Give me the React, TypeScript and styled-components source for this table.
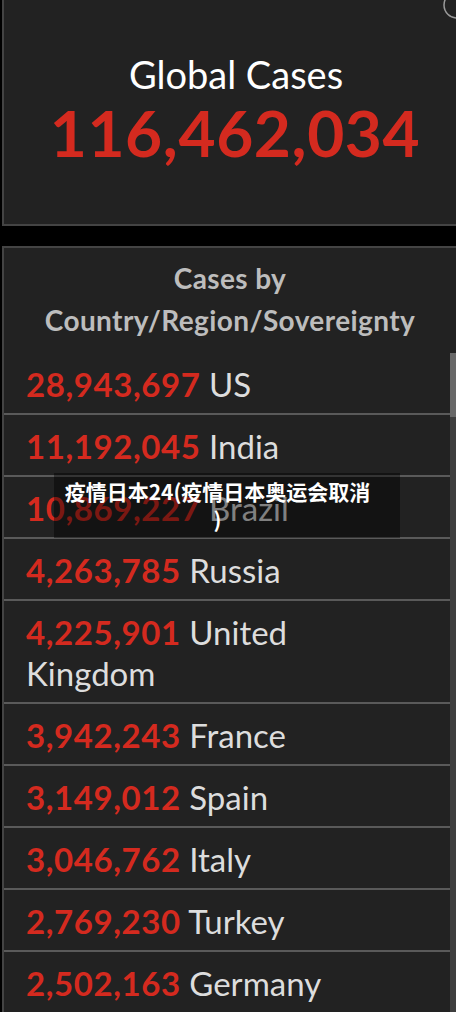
import React, { ReactElement } from 'react';
import styled, { createGlobalStyle } from 'styled-components';

interface CountryRow {
  count: string;
  name: string;
}

const rows: CountryRow[] = [
  { count: '28,943,697', name: 'US' },
  { count: '11,192,045', name: 'India' },
  { count: '10,869,227', name: 'Brazil' },
  { count: '4,263,785', name: 'Russia' },
  { count: '4,225,901', name: 'United Kingdom' },
  { count: '3,942,243', name: 'France' },
  { count: '3,149,012', name: 'Spain' },
  { count: '3,046,762', name: 'Italy' },
  { count: '2,769,230', name: 'Turkey' },
  { count: '2,502,163', name: 'Germany' }
];

const GlobalStyle = createGlobalStyle`
  html, body {
    margin: 0;
    padding: 0;
    background: #000;
  }
  #root {
    height: 1012px;
    overflow: hidden;
  }
`;

const Page = styled.div`
  display: flex;
  flex-direction: column;
  gap: 20px;
  height: 1012px;
  padding-left: 2px;
  overflow: hidden;
  font-family: Lato, 'Noto Sans', sans-serif;
`;

const TotalCard = styled.section`
  position: relative;
  flex: none;
  height: 226px;
  background: #222;
  border-left: 2px solid #444;
  border-bottom: 2px solid #444;
  display: flex;
  flex-direction: column;
  align-items: center;
  padding-top: 51px;
  box-sizing: border-box;
  overflow: hidden;
`;

const CornerButton = styled.svg`
  position: absolute;
  top: -10px;
  right: -16px;
  width: 30px;
  height: 30px;
`;

const TotalLabel = styled.div`
  color: #fff;
  font-size: 38px;
  line-height: 46px;
  font-weight: 400;
  margin-left: 12px;
`;

const TotalValue = styled.div`
  color: #d42a1f;
  font-size: 64px;
  line-height: 72px;
  font-weight: 700;
  margin-left: 10px;
  letter-spacing: 0.6px;
`;

const ListCard = styled.section`
  flex: 1;
  display: flex;
  flex-direction: column;
  background: #222;
  border-left: 2px solid #444;
  border-top: 2px solid #444;
  min-height: 0;
`;

const ListTitle = styled.h2`
  margin: 0;
  padding: 9px 0 12px 0;
  text-align: center;
  color: #bdbdbd;
  font-size: 28px;
  line-height: 42px;
  font-weight: 700;
  letter-spacing: 0.4px;
  box-sizing: border-box;
  height: 105px;
  flex: none;
`;

const ListBody = styled.div`
  position: relative;
  flex: 1;
  display: flex;
  min-height: 0;
`;

const List = styled.ul`
  list-style: none;
  margin: 0;
  padding: 0;
  flex: 1;
`;

const Row = styled.li`
  padding: 11px 26px 8px 22px;
  border-bottom: 2px solid #5a5a5a;
  font-size: 33px;
  line-height: 41px;
  color: #ddd;
`;

const Count = styled.span`
  color: #d42a1f;
  font-weight: 700;
  letter-spacing: 0.6px;
`;

const Scrollbar = styled.div`
  width: 6px;
  background: #3e3e3e;
`;

const Thumb = styled.div`
  height: 64px;
  background: #686868;
`;

const Banner = styled.div`
  position: absolute;
  top: 120px;
  left: 50px;
  width: 346px;
  height: 65px;
  box-sizing: border-box;
  padding: 4px 29px 0 10px;
  background: rgba(0, 0, 0, 0.42);
  color: #fff;
  text-align: center;
  font-family: 'Noto Sans CJK SC', 'Noto Sans', sans-serif;
  font-weight: 700;
  font-size: 21px;
  line-height: 28px;
  line-break: anywhere;
`;

export default function App(): ReactElement {
  return (
    <>
      <GlobalStyle />
      <Page>
        <TotalCard>
          <CornerButton viewBox="0 0 30 30">
            <circle cx="15" cy="15" r="13" fill="none" stroke="#9a9a9a" strokeWidth="1.5" />
          </CornerButton>
          <TotalLabel>Global Cases</TotalLabel>
          <TotalValue>116,462,034</TotalValue>
        </TotalCard>
        <ListCard>
          <ListTitle>
            Cases by
            <br />
            Country/Region/Sovereignty
          </ListTitle>
          <ListBody>
            <List>
              {rows.map((row) => (
                <Row key={row.name}>
                  <Count>{row.count}</Count> {row.name}
                </Row>
              ))}
            </List>
            <Scrollbar>
              <Thumb />
            </Scrollbar>
            <Banner>疫情日本24(疫情日本奥运会取消)</Banner>
          </ListBody>
        </ListCard>
      </Page>
    </>
  );
}
